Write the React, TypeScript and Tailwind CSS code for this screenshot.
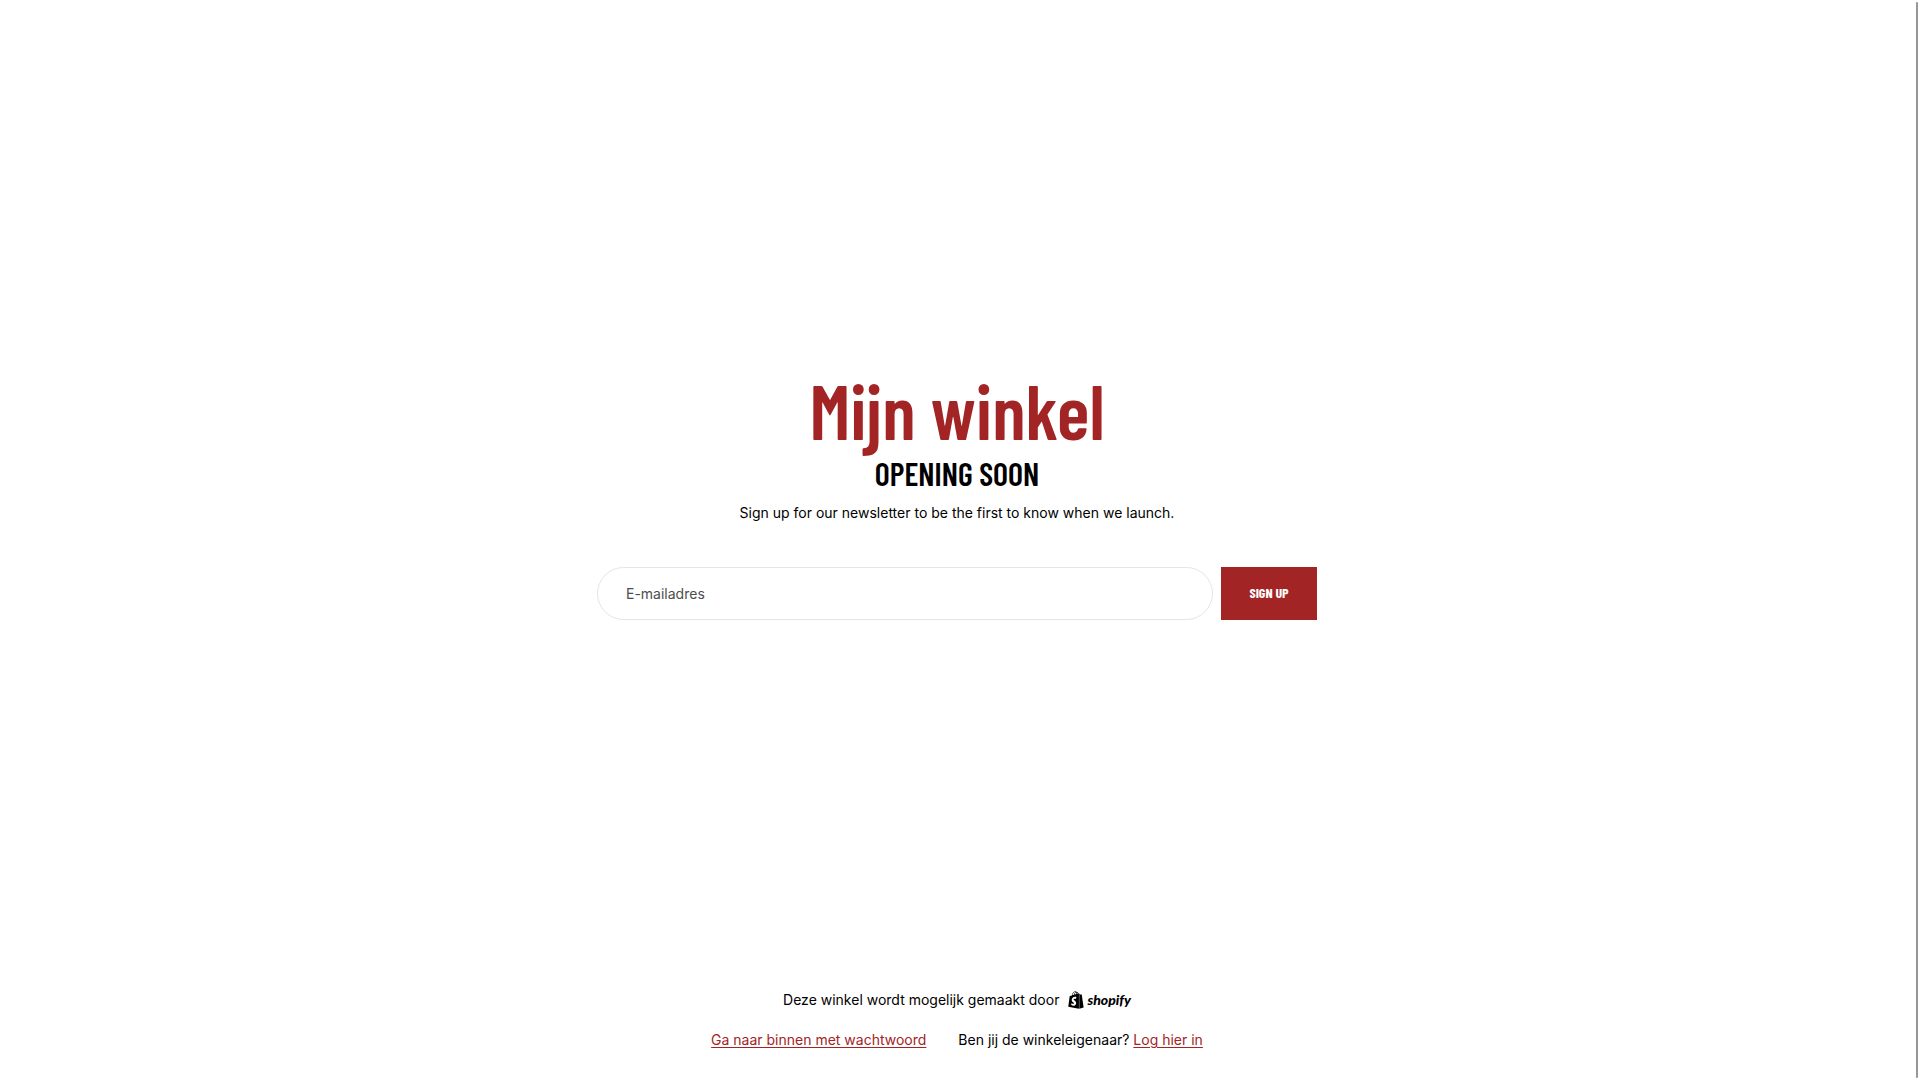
import { FaShopify } from "react-icons/fa";

function ShopifyLogo() {
  return (
    <a href="#shopify" aria-label="Shopify" className="flex items-center gap-0.5 text-black">
      <FaShopify className="size-[18px]" />
      <span className="font-[Lato,sans-serif] text-sm leading-5 font-black italic">shopify</span>
    </a>
  );
}

export default function App() {
  return (
    <div className="flex min-h-screen bg-white font-[Inter,sans-serif] text-sm text-black">
      <div className="flex flex-1 flex-col items-center px-4">
        <main className="flex w-full max-w-[720px] flex-1 flex-col items-center justify-center text-center">
          <h1 className="mb-0.5 font-['Barlow_Condensed',sans-serif] text-[76px] leading-[82px] font-semibold text-[#a32425]">
            Mijn winkel
          </h1>
          <h2 className="font-['Barlow_Condensed',sans-serif] text-[32px] leading-10 font-semibold uppercase">
            Opening soon
          </h2>
          <p className="mt-2 leading-6">Sign up for our newsletter to be the first to know when we launch.</p>
          <form className="mt-[42px] flex w-full gap-2" onSubmit={(e) => e.preventDefault()}>
            <input
              type="email"
              aria-label="E-mailadres"
              placeholder="E-mailadres"
              className="h-[53px] min-w-0 flex-1 rounded-full border border-[#e5e5e5] px-7 placeholder:text-[#4d4d4d]"
            />
            <button
              type="submit"
              className="w-24 bg-[#a32425] font-['Barlow_Condensed',sans-serif] text-sm font-bold text-white uppercase"
            >
              Sign up
            </button>
          </form>
        </main>

        <footer className="flex flex-col items-center gap-4 pb-7">
          <div className="flex items-center gap-2 leading-6">
            <span>Deze winkel wordt mogelijk gemaakt door</span>
            <ShopifyLogo />
          </div>
          <div className="flex flex-wrap items-center justify-center gap-8 leading-6">
            <a href="#password" className="text-[#a32425] underline underline-offset-2">
              Ga naar binnen met wachtwoord
            </a>
            <span>
              Ben jij de winkeleigenaar?{" "}
              <a href="#login" className="text-[#a32425] underline underline-offset-2">
                Log hier in
              </a>
            </span>
          </div>
        </footer>
      </div>

      {/* scroll track */}
      <div className="flex w-1.5 justify-center py-0.5">
        <div className="w-0.5 rounded-full bg-[#969696]" />
      </div>
    </div>
  );
}
